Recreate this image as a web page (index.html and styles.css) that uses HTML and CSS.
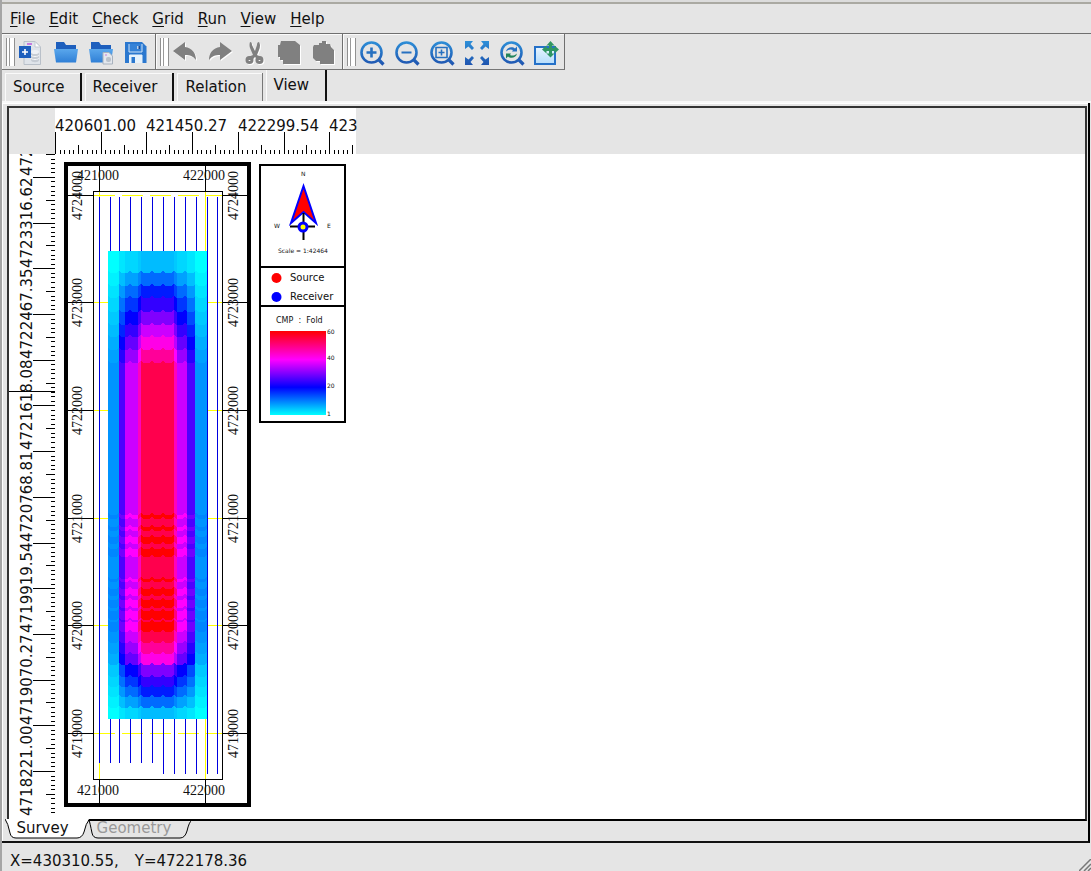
FILE: index.html
```html
<!DOCTYPE html>
<html lang="en">
<head>
<meta charset="utf-8">
<title>Survey view</title>
<link rel="stylesheet" href="styles.css">
</head>
<body>
<svg width="0" height="0" class="defs" aria-hidden="true">
  <defs>
    <linearGradient id="blue" x1="0" y1="0" x2="0" y2="24" gradientUnits="userSpaceOnUse"><stop offset="0" stop-color="#2d8fd8"/><stop offset="1" stop-color="#1f55b0"/></linearGradient>
    <linearGradient id="folder" x1="0" y1="0" x2="0" y2="1"><stop offset="0" stop-color="#5aa7ec"/><stop offset="1" stop-color="#2f7fd6"/></linearGradient>
    <linearGradient id="pale" x1="0" y1="0" x2="0" y2="1"><stop offset="0" stop-color="#e8f5ff"/><stop offset="1" stop-color="#b5dcfb"/></linearGradient>
    <g id="lens" fill="none" stroke="url(#blue)"><circle cx="11.500" cy="11.500" r="10" stroke-width="2.600"/><path d="M18.500 18.500L23.500 23.500" stroke-width="3.200"/></g>
  </defs>
</svg>
<div class="window">
  <nav class="menubar">
    <button><u>F</u>ile</button><button><u>E</u>dit</button><button><u>C</u>heck</button><button><u>G</u>rid</button><button><u>R</u>un</button><button><u>V</u>iew</button><button><u>H</u>elp</button>
  </nav>
  <div class="toolbars">
    <div class="toolbar">
      <button aria-label="New"><svg viewBox="0 0 24 24"><path d="M5 .5h11l5.500 5.500v17.500H5z" fill="#dfe4ea" stroke="#b9c0c9"/><path d="M16 .5l5.500 5.500H16z" fill="#fff" stroke="#c4cad2"/><path d="M8 3h5" stroke="#c77be0" stroke-width="2"/><path d="M12 11v8c0 3 8 3 8 0v-8" fill="#c6ccd4"/><ellipse cx="16" cy="11" rx="4" ry="2" fill="#eef1f5"/><path d="M12 14c0 2 8 2 8 0M12 17c0 2 8 2 8 0" fill="none" stroke="#f4f6f8"/><rect y="5" width="12" height="12" fill="#1e5fbd"/><path d="M6 8v6M3 11h6" stroke="#fff" stroke-width="1.600"/></svg></button>
      <button aria-label="Open"><svg viewBox="0 0 24 24"><path d="M2 1h8l2 3h10v9H2z" fill="#1e5fbd"/><path d="M0 8h24l-2 13.500H2z" fill="url(#folder)"/></svg></button>
      <button aria-label="Open project"><svg viewBox="0 0 24 24"><path d="M2 1h8l2 3h10v9H2z" fill="#1e5fbd"/><path d="M0 8h24l-2 13.500H2z" fill="url(#folder)"/><path d="M14 11.500h6l3.500 3.500v8H14z" fill="#e3e7ed" stroke="#a8b2be"/><path d="M16 14h2" stroke="#c77be0"/><rect x="17" y="16" width="5" height="5" rx="2" fill="#b9c1ca"/></svg></button>
      <button aria-label="Save"><svg viewBox="0 0 24 24"><path d="M1 1h17l4.500 4.500V22H1z" fill="#2b78cf"/><path d="M5 3v8h13V3" fill="#3482d8" stroke="#cfe3f7"/><path d="M13 5h3v3h-3z" fill="#b9cfe8"/><path d="M14.500 5h1.500v3h-1.500z" fill="#174a95"/><path d="M5.500 22v-8h12.500v8" fill="#e6f2fc" stroke="#e6f2fc"/><path d="M7.500 16h3.500v6H7.500z" fill="#2b78cf"/></svg></button>
    </div>
    <div class="toolbar gray">
      <button aria-label="Undo"><svg viewBox="0 0 24 24"><path d="M0 10L12 1v5c7 1 11 6 11 13-3-4-6-5-11-5v5z"/></svg></button>
      <button aria-label="Redo"><svg viewBox="0 0 24 24"><path d="M24 10L12 1v5C5 7 1 12 1 19c3-4 6-5 11-5v5z"/></svg></button>
      <button aria-label="Cut"><svg viewBox="0 0 24 24"><path d="M7 1q2 0 2 3l3 6 2-6q0-3 2-3 2 3 0 8l-2 5 4 2v3h-3l-3-3-3 3H5v-3l5-2-3-7q-1-3 0-6z"/><g fill="none" stroke="#808080" stroke-width="3"><circle cx="6.500" cy="19" r="2.500"/><circle cx="16.500" cy="19" r="2.500"/></g></svg></button>
      <button aria-label="Copy"><svg viewBox="0 0 24 24"><path d="M3 0h14l5 4v19H5v-4H2v-3H0V4h2z"/></svg></button>
      <button aria-label="Paste"><svg viewBox="0 0 24 24"><path d="M1 4h5V2h3V0h4v3h4l1 3 3 3v14H7v-3H3l-3-3V6z"/></svg></button>
    </div>
    <div class="toolbar">
      <button aria-label="Zoom in"><svg viewBox="0 0 24 24"><use href="#lens"/><path d="M11.500 6.500v10M6.500 11.500h10" stroke="#2670c0" stroke-width="2.600"/></svg></button>
      <button aria-label="Zoom out"><svg viewBox="0 0 24 24"><use href="#lens"/><path d="M6.500 10.500h10v2h-10z" fill="#2670c0"/></svg></button>
      <button aria-label="Zoom window"><svg viewBox="0 0 24 24"><use href="#lens"/><path d="M6 6.500h11v10H6zM11.500 8.500v6M8.500 11.500h6" fill="none" stroke="#2670c0" stroke-width="1.600"/></svg></button>
      <button aria-label="Fit"><svg viewBox="0 0 24 24"><g fill="url(#blue)"><path d="M0 0h8L5.500 3 9 7 7 9 3.500 5.500 0 8z"/><path d="M24 0h-8l2.500 3L15 7l2 2 3.500-3.500L24 8z"/><path d="M0 24h8l-2.500-3L9 17l-2-2-3.500 3.500L0 16z"/><path d="M24 24h-8l2.500-3L15 17l2-2 3.500 3.500L24 16z"/></g></svg></button>
      <button aria-label="Refresh zoom"><svg viewBox="0 0 24 24"><use href="#lens"/><path d="M6 10.500c1-5 7-5 9-3l2-2v5h-5l1-1.500c-2-1-4-1-7 1.500z" fill="#2670c0"/><path d="M17 12.500c-1 5-7 5-9 3l-2 2v-5h5l-1 1.500c2 1 4 1 7-1.500z" fill="#23835b"/></svg></button>
      <button aria-label="Pan"><svg viewBox="0 0 24 24"><path d="M0 6h20v17H0z" fill="url(#pale)" stroke="#2470c8" stroke-width="2"/><path d="M15.500 0l4 4.500h-2.500v2.500h2.500V4.500L24 8.500l-4.500 4V10h-2.500v2.500h2.500l-4 4-4-4H14V10h-2.500v2.500L7 8.500l4.500-4V7H14V4.500h-2.500z" fill="#2f9662"/></svg></button>
    </div>
  </div>
  <div class="tabs" role="tablist">
    <button role="tab">Source</button><button role="tab">Receiver</button><button role="tab">Relation</button><button role="tab" class="active" aria-selected="true">View</button>
  </div>
  <main class="panel">
    <div class="view">
      <svg id="hruler" class="hruler" width="301" height="46"></svg>
      <svg id="vruler" class="vruler" width="46" height="663"></svg>
      <div class="canvas"><svg id="map" viewBox="55 154 300 662" width="300" height="662"></svg></div>
    </div>
    <div class="sheets">
      <svg class="sheet-shape" width="200" height="24" viewBox="0 0 200 24" aria-hidden="true"><path d="M0 0Q3 4 5 14Q6 19 11 19H72Q77 19 79 13Q81 4 84 0z" fill="#fff"/><path d="M0 0Q3 4 5 14Q6 19 11 19H72Q77 19 79 13Q81 4 84 1Q85 4 87 14Q88 19 93 19H175Q180 19 182 12Q184 3 187 1" fill="none" stroke="#000"/></svg>
      <button>Survey</button><button class="off">Geometry</button>
    </div>
  </main>
  <footer class="status"><span>X=430310.55,</span><span>Y=4722178.36</span><svg class="grip" viewBox="0 0 12 12"><path d="M0 12L12 0M5 12l7-7M9 12l3-3" stroke="#777" stroke-width="1.500"/></svg></footer>
</div>
<script src="app.js"></script>
</body>
</html>
```
FILE: styles.css
```css
* { box-sizing: border-box; }
body { margin: 0; background: #a5a5a5; font: 15px/20px "DejaVu Sans", sans-serif; color: #111; }
button { font: inherit; color: inherit; border: 0; margin: 0; padding: 0; background: none; white-space: nowrap; }
svg { display: block; }
.defs { position: absolute; }
.window { display: flex; flex-direction: column; min-height: 100vh; margin-left: 2px; background: #e5e5e5; border-top: 2px solid #dcdcdc; box-shadow: inset 0 2px #aaa9a2; }
.menubar { display: flex; height: 32px; padding: 2px 0 0 1px; border-bottom: 1px solid #6f6f6f; }
.menubar button { padding: 0 7px; }
.menubar u { text-underline-offset: 2px; }
.toolbars { display: flex; height: 36px; }
.toolbar { display: flex; position: relative; padding: 2px 0 0 11px; border-right: 1px solid #6f6f6f; border-bottom: 1px solid #777; box-shadow: inset 1px 1px #fafafa; }
.toolbar:first-child { padding-right: 2px; }
.toolbar::before { content: ""; position: absolute; left: 4px; top: 4px; width: 7px; height: 28px; border: solid #909090; border-width: 0 1px; background: linear-gradient(90deg, #fff 2px, #999 2px, #999 3px, #fff 3px); }
.toolbar button { width: 35px; display: grid; place-items: center; }
.toolbar svg { width: 24px; height: 24px; overflow: visible; }
.gray svg { fill: #808080; filter: drop-shadow(1px 1px 0 #fff); }
.tabs { display: flex; align-items: flex-end; gap: 3px; height: 33px; padding-left: 3px; border-bottom: 2px solid #f8f8f8; }
.tabs button { height: 28px; padding: 0 15px 0 8px; border-right: 2px solid #111; box-shadow: inset 1px 1px #fafafa; }
.tabs button:nth-child(3) { border-right: 1px solid #777; }
.tabs .active { height: 32px; padding: 0 16px 1px 8px; }
.panel { flex: 1; display: flex; flex-direction: column; margin-right: 1px; border-right: 2px solid #000; border-bottom: 2px solid #111; padding: 3px 1px 1px 0; box-shadow: inset 1px 1px #fff; }
.view { flex: 1; display: grid; grid-template: 46px 1fr / 46px 1fr; margin-left: 5px; border: 2px solid #333; border-bottom-color: #000; }
.hruler { grid-column: 2; overflow: visible; }
.vruler { background: #fff; height: 100%; }
.canvas { background: #fff; overflow: hidden; }
.sheets { position: relative; display: flex; height: 21px; margin-top: -2px; }
.sheet-shape { position: absolute; left: 3px; top: 0; }
.sheets button { position: relative; width: 81px; height: 19px; line-height: 19px; }
.sheets .off { width: 102px; color: #999; }
.status { position: relative; display: flex; gap: 16px; height: 28px; padding: 8px 8px 0; }
.grip { position: absolute; right: 0; bottom: 0; width: 12px; height: 12px; }
text { font-family: "DejaVu Sans", sans-serif; font-size: 15px; fill: #111; }
.axis { font-family: "Liberation Serif", serif; font-size: 14px; }
.tiny { font-size: 6px; }
.small { font-size: 8px; }
.key { font-size: 10px; }
```
FILE: app.js
```js
const MAJOR = 457 / 10;

const line = (x1, y1, x2, y2, color = "#000", extra = "") =>
  `<path d="M${x1} ${y1}L${x2} ${y2}" stroke="${color}" ${extra}/>`;
const text = (x, y, s, cls = "", extra = "") =>
  `<text x="${x}" y="${y}" class="${cls}" ${extra}>${s}</text>`;

function tickLength(i) {
  return i % 10 === 0 ? 22 : i % 5 === 0 ? 9 : 4;
}

function drawHorizontalRuler() {
  let out = '<rect width="301" height="46" fill="#fff"/>';
  for (let i = 0; i <= 65; i++) {
    const x = Math.round(i * MAJOR / 10) + 0.5;
    out += line(x, 46, x, 46 - tickLength(i));
  }
  ["420601.00", "421450.27", "422299.54", "423"].forEach((s, i) => {
    out += text(Math.round(i * MAJOR * 2), 23, s);
  });
  document.getElementById("hruler").innerHTML = out;
}

function drawVerticalRuler() {
  let out = "";
  const origin = 617;
  for (let i = -9; i <= 135; i++) {
    const y = Math.round(origin - i * MAJOR / 10) + 0.5;
    if (y > 0) out += line(46 - tickLength(i), y, 46, y);
  }
  out += line(0, 237.5, 46, 237.5);
  const labels = ["4718221.00", "4719070.27", "4719919.54", "4720768.81", "4721618.08", "4722467.35", "4723316.62", "472"];
  labels.forEach((s, i) => {
    const y = Math.round(662 - i * MAJOR * 2);
    out += text(0, 0, s, "", `transform="translate(23 ${y}) rotate(-90)"`);
  });
  document.getElementById("vruler").innerHTML = out;
}

function foldColor(v) {
  const mix = (t) => Math.round(255 * Math.max(0, Math.min(1, t)));
  if (v <= 20) return `rgb(0,${mix((20 - v) / 19)},255)`;
  if (v <= 40) return `rgb(${mix((v - 20) / 20)},0,255)`;
  return `rgb(255,0,${mix((60 - v) / 20)})`;
}

// Column edges and the full fold reached in each column.
const EDGES = [108, 119, 125, 138, 141, 174, 177, 187, 195, 207];
const FOLD = [9, 26, 36, 45, 54, 45, 36, 26, 9];
// Bottom edge of each row, with its share of the full fold in ninths.
const ROWS = [
  [271, 1], [284, 2], [296, 3], [310, 4], [323, 5], [335, 6], [348, 7], [361, 8],
  [513, 9], [517, 10], [525, 9], [529, 10], [535, 9], [542, 10], [547, 9], [555, 10],
  [577, 9], [580, 10], [587, 9], [594, 10], [598, 9], [606, 10], [609, 9], [618, 10],
  [620, 9], [630, 10], [641, 9], [652, 8], [663, 7], [675, 5], [685, 4],
  [695, 3], [706, 2], [719, 1]
];

function drawFold() {
  let out = "";
  for (let r = ROWS.length - 1; r >= 0; r--) {
    const [bottom, share] = ROWS[r];
    let stops = "";
    FOLD.forEach((f, c) => {
      const color = foldColor(f * share / 9);
      stops += `<stop offset="${(EDGES[c] - 108) / 99}" stop-color="${color}"/><stop offset="${(EDGES[c + 1] - 108) / 99}" stop-color="${color}"/>`;
    });
    out += `<linearGradient id="r${r}" gradientUnits="userSpaceOnUse" x1="108" y1="0" x2="207" y2="0">${stops}</linearGradient>`;
    const last = r === ROWS.length - 1;
    let edge = last ? "H207" : "";
    if (!last) {
      for (let i = 0; i < 9; i++) edge += "q0 2 3 3h5q3-1 3-3";
    }
    out += `<path d="M108 ${r ? ROWS[r - 1][0] - 1 : 251}V${last ? bottom : bottom - 1}${edge}V${r ? ROWS[r - 1][0] - 1 : 251}z" fill="url(#r${r})" shape-rendering="crispEdges"/>`;
  }
  return out;
}

function drawMap() {
  let out = '<rect x="66" y="164" width="183" height="641" fill="none" stroke="#000" stroke-width="4"/>';
  const ys = [195, 302, 410, 518, 625, 733];
  const xs = [99, 205];
  ys.forEach((y) => {
    const dash = y === 195 || y === 733 ? 'stroke-dasharray="21 7"' : "";
    out += line(68, y + 0.5, 93, y + 0.5) + line(223, y + 0.5, 247, y + 0.5);
    out += line(94, y + 0.5, 222, y + 0.5, "#ff0", dash);
  });
  xs.forEach((x) => {
    out += line(x + 0.5, 166, x + 0.5, 191) + line(x + 0.5, 780, x + 0.5, 803);
    out += line(x + 0.5, 192, x + 0.5, 779, "#ff0");
  });
  [99, 110, 119, 130, 141, 152, 163, 174, 185, 196, 207, 217].forEach((x, i) => {
    out += line(x + 0.5, 197, x + 0.5, i < 6 ? 763 : 774, "#0000e0");
  });
  out += '<rect x="93.500" y="191.500" width="129" height="588" fill="none" stroke="#000"/>';
  out += drawFold();
  ["421000", "422000"].forEach((s, i) => {
    const x = 77 + i * 106;
    out += text(x, 180, s, "axis") + text(x, 795, s, "axis");
  });
  ys.forEach((y, i) => {
    [82, 238].forEach((x) => {
      out += text(0, 0, 4724000 - i * 1000, "axis", `transform="translate(${x} ${y + 25}) rotate(-90)"`);
    });
  });
  document.getElementById("map").innerHTML = out + drawLegend();
}

function drawLegend() {
  return '<rect x="260" y="165" width="85" height="257" fill="none" stroke="#000" stroke-width="2"/>' +
    line(260, 267, 345, 267, "#000", 'stroke-width="2"') +
    line(260, 306, 345, 306, "#000", 'stroke-width="2"') +
    text(301, 176, "N", "tiny") + text(274, 228, "W", "tiny") + text(327, 228, "E", "tiny") +
    '<path d="M303.500 186L316 223L303.500 212L291 223z" fill="#f00" stroke="#00f" stroke-width="2"/>' +
    '<path d="M303.500 213V240M290 226.500H315" stroke="#000" stroke-width="2"/>' +
    '<circle cx="303" cy="227" r="4" fill="#ff0" stroke="#00f" stroke-width="3"/>' +
    text(278, 253, "Scale = 1:42464", "tiny") +
    '<circle cx="276.500" cy="278" r="5" fill="#f00"/><circle cx="276.500" cy="297" r="5" fill="#00f"/>' +
    text(290, 281, "Source", "key") + text(290, 300, "Receiver", "key") +
    text(276, 323, "CMP&#160; :&#160; Fold", "small") +
    '<linearGradient id="scale" x1="0" y1="0" x2="0" y2="1"><stop offset="0" stop-color="#f00"/><stop offset=".34" stop-color="#f0f"/><stop offset=".67" stop-color="#00f"/><stop offset="1" stop-color="#0ff"/></linearGradient>' +
    '<rect x="270" y="331" width="56" height="84" fill="url(#scale)"/>' +
    text(327, 334, "60", "tiny") + text(327, 360, "40", "tiny") + text(327, 388, "20", "tiny") + text(327, 416, "1", "tiny");
}

drawHorizontalRuler();
drawVerticalRuler();
drawMap();
```
